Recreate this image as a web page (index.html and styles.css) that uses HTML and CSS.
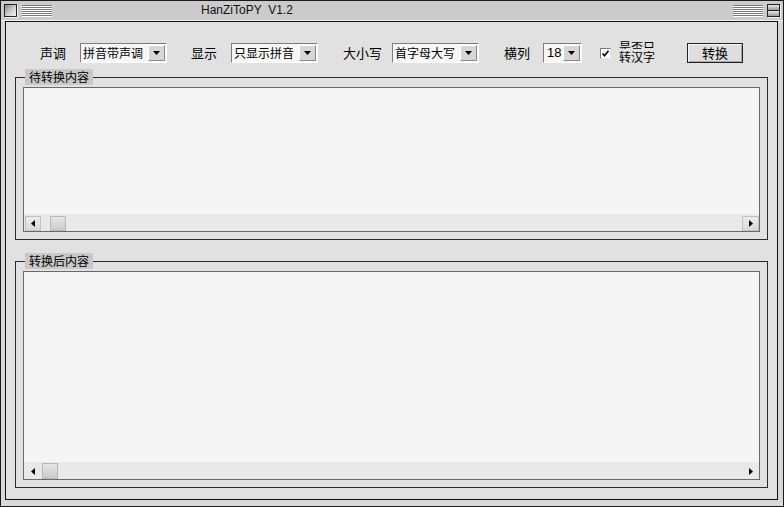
FILE: index.html
```html
<!DOCTYPE html>
<html lang="zh-CN">
<head>
<meta charset="utf-8">
<title>HanZiToPY V1.2</title>
<link rel="stylesheet" href="styles.css">
</head>
<body>
<div class="window">
  <div class="titlebar">
    <span class="closebox"></span>
    <span class="stripes"></span>
    <span class="title">HanZiToPY  V1.2</span>
    <span class="stripes stripes-right"></span>
    <span class="zoombox"><span class="zb-top"></span><span class="zb-bottom"></span></span>
  </div>
  <div class="frame">
    <div class="toolbar">
      <div class="field">
        <span class="lbl">声调</span>
        <div class="select"><span class="val">拼音带声调</span><span class="drop"><svg width="7" height="4" viewBox="0 0 7 4"><polygon points="0,0 7,0 3.5,4" fill="#000"/></svg></span></div>
      </div>
      <div class="field field-gap-24">
        <span class="lbl">显示</span>
        <div class="select"><span class="val">只显示拼音</span><span class="drop"><svg width="7" height="4" viewBox="0 0 7 4"><polygon points="0,0 7,0 3.5,4" fill="#000"/></svg></span></div>
      </div>
      <div class="field field-gap-25">
        <span class="lbl lbl-wide">大小写</span>
        <div class="select"><span class="val">首字母大写</span><span class="drop"><svg width="7" height="4" viewBox="0 0 7 4"><polygon points="0,0 7,0 3.5,4" fill="#000"/></svg></span></div>
      </div>
      <div class="field field-gap-25">
        <span class="lbl lbl-short">横列</span>
        <div class="select select-small"><span class="val">18</span><span class="drop"><svg width="7" height="4" viewBox="0 0 7 4"><polygon points="0,0 7,0 3.5,4" fill="#000"/></svg></span></div>
      </div>
      <label class="check">
        <span class="box"><svg width="9" height="9" viewBox="0 0 9 9"><polyline points="1.5,4.5 3.5,6.8 7.5,1.8" fill="none" stroke="#000" stroke-width="1.6"/></svg></span>
        <span class="check-text"><span class="l1">是否只</span><span class="l2">转汉字</span></span>
      </label>
      <button class="btn" type="button">转换</button>
    </div>

    <fieldset class="group">
      <legend>待转换内容</legend>
      <div class="textarea ta-input">
        <div class="ta-body"></div>
        <div class="hscroll">
          <span class="sb-btn"><svg width="4" height="7" viewBox="0 0 4 7"><polygon points="4,0 0,3.5 4,7" fill="#000"/></svg></span>
          <span class="thumb thumb-1"></span>
          <span class="sb-btn sb-right"><svg width="4" height="7" viewBox="0 0 4 7"><polygon points="0,0 4,3.5 0,7" fill="#000"/></svg></span>
        </div>
      </div>
    </fieldset>

    <fieldset class="group group-2">
      <legend>转换后内容</legend>
      <div class="textarea ta-output">
        <div class="ta-body"></div>
        <div class="hscroll">
          <span class="sb-btn sb-flat"><svg width="4" height="7" viewBox="0 0 4 7"><polygon points="4,0 0,3.5 4,7" fill="#000"/></svg></span>
          <span class="thumb thumb-2"></span>
          <span class="sb-btn sb-flat sb-right"><svg width="4" height="7" viewBox="0 0 4 7"><polygon points="0,0 4,3.5 0,7" fill="#000"/></svg></span>
        </div>
      </div>
    </fieldset>
  </div>
</div>
</body>
</html>
```
FILE: styles.css
```css
* { box-sizing: border-box; }

html, body {
  margin: 0;
  padding: 0;
  background: #d6d6d6;
}

body {
  font-family: "Noto Sans CJK SC", "Liberation Sans", sans-serif;
  color: #000;
}

.window {
  width: 784px;
  height: 507px;
  border: 1px solid #1a1a1a;
  background: #d8d8d8;
  display: flex;
  flex-direction: column;
}

/* ---------- title bar ---------- */
.titlebar {
  height: 20px;
  flex: none;
  display: flex;
  align-items: flex-start;
  background: #cbcbcb;
  border-bottom: 1px solid #f4f4f4;
}

.closebox {
  width: 13px;
  height: 13px;
  margin: 3px 0 0 3px;
  border: 1px solid #222;
  background: linear-gradient(135deg, #8a8a8a 0%, #cfcfcf 55%, #f2f2f2 100%);
  box-shadow: 1px 1px 0 #f4f4f4;
}

.stripes {
  width: 30px;
  height: 12px;
  margin: 4px 0 0 5px;
  background: repeating-linear-gradient(to bottom, #7a7a7a 0 1px, #ffffff 1px 2px);
}

.stripes-right {
  margin-left: auto;
}

.title {
  margin-left: 149px;
  font-family: "Liberation Sans", sans-serif;
  font-size: 12px;
  line-height: 19px;
  white-space: pre;
  color: #111;
}

.zoombox {
  width: 13px;
  height: 13px;
  margin: 3px 3px 0 4px;
  border: 1px solid #222;
  display: flex;
  flex-direction: column;
  box-shadow: 1px 1px 0 #f4f4f4;
}

.zb-top, .zb-bottom {
  flex: 1;
  background: linear-gradient(#e6e6e6, #9a9a9a);
}

.zb-top {
  border-bottom: 1px solid #222;
}

/* ---------- frame ---------- */
.frame {
  flex: 1;
  margin: 0 5px 6px 4px;
  border: 1px solid #111;
  background: #e1e1e1;
  padding: 21px 9px 11px 9px;
  display: flex;
  flex-direction: column;
}

/* ---------- toolbar ---------- */
.toolbar {
  height: 20px;
  display: flex;
  align-items: center;
  padding-left: 25px;
  margin-bottom: 6px;
  font-size: 13px;
}

.field {
  display: flex;
  align-items: center;
}

.field-gap-24 { margin-left: 24px; }
.field-gap-25 { margin-left: 25px; }

.lbl {
  width: 40px;
  line-height: 20px;
  white-space: nowrap;
}

.lbl-wide { width: 49px; }
.lbl-short { width: 39px; }

.select {
  width: 87px;
  height: 20px;
  display: flex;
  align-items: stretch;
  border-top: 1px solid #7c7c7c;
  border-left: 1px solid #7c7c7c;
  border-right: 1px solid #ffffff;
  border-bottom: 1px solid #ffffff;
  background: #f7f7f7;
}

.select-small { width: 39px; }

.val {
  flex: 1;
  padding-left: 2px;
  font-size: 12px;
  line-height: 18px;
  white-space: nowrap;
  overflow: hidden;
}

.select-small .val {
  font-family: "Liberation Sans", sans-serif;
  font-size: 13px;
  padding-left: 3px;
}

.drop {
  width: 17px;
  margin: 1px 1px 1px 0;
  display: flex;
  align-items: center;
  justify-content: center;
  background: #d6d6d6;
  border-top: 1px solid #ffffff;
  border-left: 1px solid #ffffff;
  border-right: 1px solid #8a8a8a;
  border-bottom: 1px solid #8a8a8a;
}

/* ---------- checkbox ---------- */
.check {
  margin-left: 18px;
  display: flex;
  align-items: center;
}

.box {
  width: 11px;
  height: 11px;
  margin-top: 1px;
  background: #ffffff;
  border-top: 1px solid #7c7c7c;
  border-left: 1px solid #7c7c7c;
  border-right: 1px solid #e8e8e8;
  border-bottom: 1px solid #e8e8e8;
  display: flex;
  align-items: center;
  justify-content: center;
}

.check-text {
  margin-left: 8px;
  width: 37px;
  height: 25px;
  margin-top: -1px;
  display: flex;
  flex-direction: column;
  font-size: 12px;
}

.l1 {
  height: 9px;
  line-height: 13px;
  overflow: hidden;
  white-space: nowrap;
}

.l2 {
  line-height: 15px;
  white-space: nowrap;
  background: #e1e1e1;
}

/* ---------- button ---------- */
.btn {
  margin-left: 31px;
  width: 56px;
  height: 20px;
  padding: 0;
  border: 1px solid #222;
  background: #dedede;
  box-shadow: inset 1px 1px 0 #f8f8f8, inset -1px -1px 0 #a8a8a8;
  font-family: "Noto Sans CJK SC", sans-serif;
  font-size: 13px;
  line-height: 18px;
  color: #000;
}

/* ---------- group boxes ---------- */
.group {
  margin: 0;
  padding: 2px 7px 7px 7px;
  border: 1px solid #2a2a2a;
  min-width: 0;
}

.group-2 {
  margin-top: 13px;
}

.group legend {
  margin-left: 2px;
  padding: 0 4px;
  background: #c8c8c8;
  font-size: 12px;
  line-height: 16px;
  height: 16px;
}

.textarea {
  border: 1px solid #6a6a6a;
  background: #f5f5f5;
  display: flex;
  flex-direction: column;
}

.ta-input { height: 145px; }
.ta-output { height: 209px; }

.ta-body { flex: 1; }

.hscroll {
  height: 17px;
  display: flex;
  align-items: flex-end;
  padding: 0 0 0 1px;
  background: #e9e9e9;
}

.sb-btn {
  width: 16px;
  height: 15px;
  display: flex;
  align-items: center;
  justify-content: center;
  border: 1px solid #c2c2c2;
  background: linear-gradient(#ececec, #d8d8d8);
}

.sb-right {
  margin-left: auto;
  width: 17px;
}

.sb-flat {
  border-color: transparent;
  background: transparent;
}

.thumb {
  width: 16px;
  height: 15px;
  border: 1px solid #b8b8b8;
  background: linear-gradient(#e6e6e6, #cbcbcb);
}

.thumb-1 { margin-left: 9px; }
.thumb-2 { margin-left: 1px; height: 16px; }
```
